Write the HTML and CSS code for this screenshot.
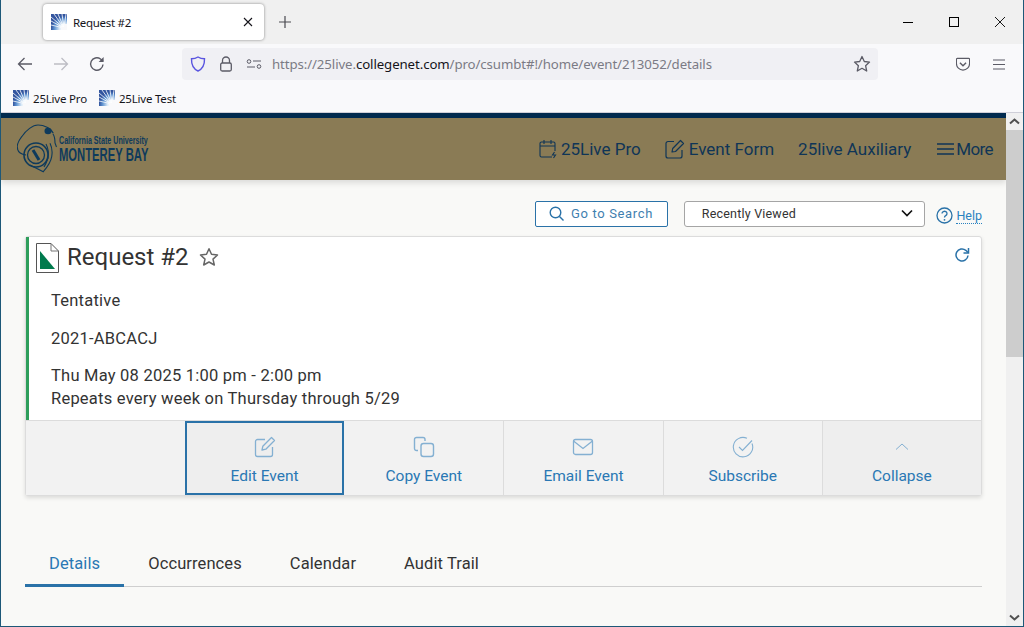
FILE: index.html
```html
<!DOCTYPE html>
<html lang="en">
<head>
<meta charset="utf-8">
<title>Request #2</title>
<link rel="stylesheet" href="styles.css">
</head>
<body>
<svg class="defs" width="0" height="0" aria-hidden="true">
  <defs>
    <radialGradient id="fade" cx="100%" cy="100%" r="85%" gradientTransform="translate(-0.15 -0.05)">
      <stop offset="0" stop-color="#fff"/><stop offset="0.35" stop-color="#e4f0fa"/><stop offset="0.75" stop-color="#5f93d0"/><stop offset="1" stop-color="#33559f"/>
    </radialGradient>
    <symbol id="fav" viewBox="0 0 16 16">
      <rect width="16" height="16" fill="url(#fade)"/>
      <g stroke="#fff" stroke-width=".8">
        <path d="M13 14 3 0M13 14 7 0M13 14 11 0M13 14 15 0M13 14 0 3M13 14 0 7M13 14 0 11"/>
      </g>
      <rect x="10" y="13" width="6" height="3" fill="#f9f9fb"/>
      <rect x="13" y="10" width="3" height="6" fill="#f9f9fb"/>
    </symbol>
  </defs>
</svg>
<div class="window">
  <div class="tabbar">
    <div class="tab">
      <svg class="fav16" width="16" height="16"><use href="#fav"/></svg>
      <span class="tab-title">Request #2</span>
      <svg class="tab-close" width="10" height="10" viewBox="0 0 10 10"><path d="M1 1l8 8M9 1l-8 8" stroke="#15141a" stroke-width="1.1"/></svg>
    </div>
    <svg class="new-tab" width="12" height="12" viewBox="0 0 12 12"><path d="M6 0v12M0 6h12" stroke="#4a4a50" stroke-width="1.2"/></svg>
    <div class="win-controls">
      <svg width="10" height="10" viewBox="0 0 10 10"><path d="M0 5.5h10" stroke="#000"/></svg>
      <svg width="10" height="10" viewBox="0 0 10 10"><rect x=".5" y=".5" width="9" height="9" fill="none" stroke="#000"/></svg>
      <svg width="10" height="10" viewBox="0 0 10 10"><path d="M0 0l10 10M10 0 0 10" stroke="#000" stroke-width=".9"/></svg>
    </div>
  </div>
  <div class="toolbar">
    <div class="nav-btns">
      <svg width="16" height="16" viewBox="0 0 16 16"><path d="M15 8H1.500M7.500 2 1.500 8l6 6" fill="none" stroke="#5b5b66" stroke-width="1.300"/></svg>
      <svg width="16" height="16" viewBox="0 0 16 16"><path d="M1 8h13.500M8.500 2l6 6-6 6" fill="none" stroke="#bdbdc4" stroke-width="1.300"/></svg>
      <svg width="16" height="16" viewBox="0 0 16 16"><path d="M14 8.500A6.200 6.200 0 1 1 11.500 3L14 5" fill="none" stroke="#5b5b66" stroke-width="1.400"/><path d="M14.600 1v5h-5z" fill="#5b5b66"/></svg>
    </div>
    <div class="urlbar">
      <svg class="u-shield" width="16" height="16" viewBox="0 0 16 16"><path d="M8 1c2 1.300 4 1.800 6.500 1.800C14.700 9 12.500 13 8 15 3.500 13 1.300 9 1.500 2.800 4 2.800 6 2.300 8 1z" fill="none" stroke="#5a55e0" stroke-width="1.400"/></svg>
      <svg class="u-lock" width="16" height="16" viewBox="0 0 16 16"><path d="M4.500 7V4.500a3.500 3.500 0 0 1 7 0V7" fill="none" stroke="#5b5b66" stroke-width="1.300"/><rect x="2.700" y="7" width="10.600" height="8" rx="1.500" fill="none" stroke="#5b5b66" stroke-width="1.300"/></svg>
      <svg class="u-perm" width="16" height="16" viewBox="0 0 16 16"><path d="M7 5h8M1 11h8" stroke="#5b5b66" stroke-width="1.200"/><circle cx="3" cy="5.500" r="1.800" fill="none" stroke="#5b5b66"/><circle cx="13" cy="10.500" r="1.800" fill="none" stroke="#5b5b66"/></svg>
      <span class="url">https://25live.<b>collegenet.com</b>/pro/csumbt#!/home/event/213052/details</span>
      <svg class="u-star" width="18" height="18" viewBox="0 0 18 18"><path d="M9 1.500l2.300 5 5.200.6-3.900 3.600 1.100 5.300L9 13.300 4.300 16l1.100-5.300L1.500 7.100l5.200-.6z" fill="none" stroke="#5b5b66" stroke-width="1.300" stroke-linejoin="round"/></svg>
    </div>
    <div class="tool-right">
      <svg width="14" height="14" viewBox="0 0 16 16"><path d="M1.500 1.500h13a1 1 0 0 1 1 1v5a7.500 7.500 0 0 1-15 0v-5a1 1 0 0 1 1-1z" fill="none" stroke="#5b5b66" stroke-width="1.300"/><path d="M4.500 6.500l3.500 3.500 3.500-3.500" fill="none" stroke="#5b5b66" stroke-width="1.600"/></svg>
      <svg width="12" height="11" viewBox="0 0 12 11"><path d="M0 1h12M0 5.500h12M0 10h12" stroke="#5b5b66" stroke-width="1.100"/></svg>
    </div>
  </div>
  <div class="bookmarks">
    <span class="bm"><svg width="16" height="16"><use href="#fav"/></svg>25Live Pro</span>
    <span class="bm"><svg width="16" height="16"><use href="#fav"/></svg>25Live Test</span>
  </div>
  <div class="viewport">
    <div class="page">
      <header class="site-head">
        <div class="logo">
          <svg width="40" height="50" viewBox="0 0 40 50">
            <g fill="none" stroke="#0e3a5c" stroke-width="1.100">
              <path d="M36.300 9.300C34 4 27 1 21 1 16 1 9 6 4.700 12.700 1.500 17 0 21 .3 23c0 4 1.700 7 8.700 8"/>
              <path d="M36 10c2 3 2 6 2 9l1.500 4M33 19.300c2 4 2.500 9 1.700 13.400-.8 5-4 10-8.400 15L13 41"/>
              <path d="M29 20c2 4 3 9 2 14-1 3-2 6-4 9"/>
              <circle cx="19" cy="31" r="12" stroke-width="1.600"/>
              <circle cx="19" cy="31" r="8.500" stroke-width="1.300"/>
              <path d="M16 26l6 10" stroke-width="3"/>
            </g>
            <ellipse cx="31" cy="7" rx="3.500" ry="3.200" fill="#0e3a5c"/>
          </svg>
          <div class="logo-text"><span class="logo-top">California State University</span><span class="logo-main">MONTEREY BAY</span></div>
        </div>
        <nav class="site-nav">
          <a class="nav-item"><svg width="18" height="20" viewBox="0 0 18 20"><g fill="none" stroke="#0f3557" stroke-width="1.100"><path d="M13 18H2.500A1.500 1.500 0 0 1 1 16.500V4.500A1.500 1.500 0 0 1 2.500 3h12A1.500 1.500 0 0 1 16 4.500V12M1 7h15M5 1v4M12 1v4"/><path d="M15.500 13l-2 3h3l-2 3"/></g></svg>25Live Pro</a>
          <a class="nav-item"><svg width="20" height="20" viewBox="0 0 20 20"><g fill="none" stroke="#0f3557" stroke-width="1.200"><path d="M9 2.500H3A2 2 0 0 0 1 4.500v12.500a2 2 0 0 0 2 2h12a2 2 0 0 0 2-2v-6"/><path d="M7 13l.7-3.500L15.500 1.500 18.500 4.500 10.500 12.500z" stroke-linejoin="round"/></g></svg>Event Form</a>
          <a class="nav-item">25live Auxiliary</a>
          <a class="nav-item nav-more"><svg width="19" height="14" viewBox="0 0 19 14"><path d="M1 2h17M1 7h17M1 12h17" stroke="#0f3557" stroke-width="1.600"/></svg><span class="more-label">More</span></a>
        </nav>
      </header>
      <main class="content">
        <div class="search-row">
          <button class="search-btn"><svg width="15" height="15" viewBox="0 0 15 15"><circle cx="6.500" cy="6.500" r="5.300" fill="none" stroke="#2a72a8" stroke-width="1.400"/><path d="M10.500 10.500l4 4" stroke="#2a72a8" stroke-width="1.400"/></svg>Go to Search</button>
          <div class="recent"><span>Recently Viewed</span><svg width="12" height="8" viewBox="0 0 12 8"><path d="M1 1.500l5 5 5-5" fill="none" stroke="#111" stroke-width="1.700"/></svg></div>
          <a class="help"><svg width="17" height="17" viewBox="0 0 17 17"><circle cx="8.500" cy="8.500" r="7.500" fill="none" stroke="#2a72a8" stroke-width="1.300"/><path d="M6 6.500a2.500 2.300 0 1 1 3.700 2.100c-.9.500-1.200 1-1.200 2" fill="none" stroke="#2a72a8" stroke-width="1.300"/><circle cx="8.500" cy="12.800" r=".9" fill="#2a72a8"/></svg><span>Help</span></a>
        </div>
        <section class="card">
          <div class="card-body">
            <div class="card-title">
              <svg class="doc" width="23" height="30" viewBox="0 0 23 30"><path d="M.5.5H15L22.500 8V29.500H.5z" fill="#fff" stroke="#555"/><path d="M15 .5V8h7.500" fill="none" stroke="#777"/><path d="M4 8 19 26H4z" fill="#007a4d"/></svg>
              <h1>Request #2</h1>
              <svg class="fav-star" width="20" height="20" viewBox="0 0 20 20"><path d="M10 1.800l2.500 5.500 6 .7-4.500 4.100 1.300 5.900L10 15l-5.300 3 1.300-5.900L1.500 8l6-.7z" fill="none" stroke="#666" stroke-width="1.500" stroke-linejoin="round"/></svg>
              <svg class="refresh" width="16" height="16" viewBox="0 0 16 16"><path d="M14 8.500A6 6 0 1 1 11.800 3.300L14 5.500" fill="none" stroke="#2a72a8" stroke-width="1.500"/><path d="M14.500 1v5h-5" fill="none" stroke="#2a72a8" stroke-width="1.500"/></svg>
            </div>
            <p class="state">Tentative</p>
            <p class="ref">2021-ABCACJ</p>
            <p class="date">Thu May 08 2025 1:00 pm - 2:00 pm<br>Repeats every week on Thursday through 5/29</p>
          </div>
          <div class="actions">
            <div class="act-spacer"></div>
            <a class="act act-active"><svg width="22" height="22" viewBox="0 0 22 22"><g fill="none" stroke="#84b0d2" stroke-width="1.300"><path d="M11 3.500H3.500a2 2 0 0 0-2 2v13a2 2 0 0 0 2 2h13a2 2 0 0 0 2-2V11"/><path d="M8 14l.8-3.700L17.500 1.500l3 3-8.700 8.700z" stroke-linejoin="round"/></g></svg>Edit Event</a>
            <a class="act"><svg width="22" height="22" viewBox="0 0 22 22"><g fill="none" stroke="#84b0d2" stroke-width="1.400"><rect x="8" y="7.500" width="12.500" height="13" rx="2.500"/><path d="M5 14.500H3.500a2 2 0 0 1-2-2V3.500a2 2 0 0 1 2-2H10a2 2 0 0 1 2 2v1.500"/></g></svg>Copy Event</a>
            <a class="act"><svg width="22" height="22" viewBox="0 0 22 22"><g fill="none" stroke="#84b0d2" stroke-width="1.300"><rect x="1.500" y="3.500" width="19" height="15" rx="2"/><path d="M1.500 5l9.500 7.500L20.500 5"/></g></svg>Email Event</a>
            <a class="act"><svg width="22" height="22" viewBox="0 0 22 22"><g fill="none" stroke="#84b0d2" stroke-width="1.100"><path d="M20 7.500A9.700 9.700 0 1 1 15 2.300"/><path d="M7 11l3.500 3.500 9.500-10"/></g></svg>Subscribe</a>
            <a class="act act-collapse"><svg width="22" height="22" viewBox="0 0 22 22"><path d="M5 13.500l6-5.500 6 5.500" fill="none" stroke="#84b0d2" stroke-width="1"/></svg>Collapse</a>
          </div>
        </section>
        <div class="tabs">
          <a class="tab-link tab-current">Details</a>
          <a class="tab-link">Occurrences</a>
          <a class="tab-link">Calendar</a>
          <a class="tab-link">Audit Trail</a>
        </div>
      </main>
    </div>
    <div class="scrollbar">
      <svg class="sb-arrow" width="17" height="17" viewBox="0 0 17 17"><path d="M4 10.500l4.500-4 4.500 4" fill="none" stroke="#505050" stroke-width="2"/></svg>
      <div class="sb-thumb"></div>
      <div class="sb-track"></div>
      <svg class="sb-arrow" width="17" height="17" viewBox="0 0 17 17"><path d="M4 6.500l4.500 4 4.500-4" fill="none" stroke="#505050" stroke-width="2"/></svg>
    </div>
  </div>
</div>
</body>
</html>
```
FILE: styles.css
```css
* { box-sizing: border-box; }
html, body { margin: 0; padding: 0; height: 100%; overflow: hidden; }
body { font-family: Roboto, "Liberation Sans", sans-serif; background: #f9f9f7; }
svg { display: block; flex: none; }
.defs { position: absolute; }
.window {
  width: 1024px; height: 627px; display: flex; flex-direction: column;
  border-left: 1px solid #1d5878; border-bottom: 1px solid #1d5878; border-right: 1px solid #1d5878;
}
.tabbar { height: 44px; background: #f0f0f0; display: flex; align-items: center; padding-left: 42px; flex: none; }
.tab {
  width: 221px; height: 36px; background: #fff; border-radius: 4px;
  box-shadow: 0 0 3px rgba(0,0,0,.45); display: flex; align-items: center; padding: 0 11px 0 8px;
}
.tab-title { font: 11.5px "Noto Sans", "Open Sans", sans-serif; letter-spacing: -.3px; color: #15141a; margin-left: 6px; flex: 1; }
.new-tab { margin-left: 15px; }
.win-controls { margin-left: auto; display: flex; gap: 36px; padding-right: 18px; }
.toolbar { height: 40px; background: #f9f9fb; display: flex; align-items: center; flex: none; }
.nav-btns { display: flex; gap: 20px; padding-left: 16px; width: 181px; }
.urlbar {
  width: 696px; height: 32px; background: #f0f0f4; border-radius: 4px;
  display: flex; align-items: center; padding-left: 8px;
}
.u-lock, .u-perm { margin-left: 12px; }
.url { font: 13.25px "Noto Sans", "Open Sans", sans-serif; color: #7b7b85; margin-left: 10px; flex: 1; white-space: nowrap; letter-spacing: -.1px; }
.url b { font-weight: 400; color: #15141a; }
.u-star { margin-right: 7px; }
.tool-right { display: flex; align-items: center; gap: 23px; padding-left: 78px; }
.bookmarks { height: 29px; background: #f9f9fb; border-bottom: 1px solid #cfcfd8; display: flex; gap: 12px; padding: 3px 0 0 12px; flex: none; }
.bm { display: flex; align-items: center; gap: 4px; font: 11.5px "Noto Sans", "Open Sans", sans-serif; color: #15141a; height: 22px; letter-spacing: -.2px; }
.viewport { flex: 1; display: flex; min-height: 0; }
.page { flex: 1; min-width: 0; overflow: hidden; }
.site-head {
  height: 67px; background: #8a7b55; border-top: 5px solid #002a4e;
  box-shadow: 0 3px 6px rgba(0,0,0,.12);
  display: flex; align-items: center; justify-content: space-between; padding: 0 13px 0 16px;
}
.logo { display: flex; align-items: center; gap: 2px; color: #0e3a5c; }
.logo-text { display: flex; flex-direction: column; font-family: "Liberation Sans", sans-serif; font-weight: 700; width: 90px; white-space: nowrap; }
.logo-top { font-size: 11px; line-height: 12px; transform: scaleX(.648); transform-origin: left center; }
.logo-main { font-size: 18px; line-height: 19px; transform: scaleX(.625); transform-origin: left center; }
.site-nav { display: flex; align-items: center; gap: 24px; }
.nav-item { display: flex; align-items: center; gap: 4px; font-size: 17px; color: #0f3557; white-space: nowrap; }
.nav-more { gap: 1px; margin-left: 1px; }
.more-label { letter-spacing: -.6px; }
.content { padding: 21px 24px 0; }
.search-row { display: flex; align-items: center; height: 26px; }
.search-btn {
  margin-left: 510px; width: 133px; height: 26px; background: #fff; border: 1px solid #2a72a8; border-radius: 2px;
  font: 13px Roboto, sans-serif; letter-spacing: .65px; color: #3f7fb0; display: flex; align-items: center; gap: 7px; padding: 0 0 1px 13px;
}
.recent {
  margin-left: 16px; width: 242px; height: 26px; background: #fff; border: 1px solid #a5a5a5; border-radius: 3px;
  display: flex; align-items: center; justify-content: space-between; padding: 0 11px 2px 17px;
  font-size: 12.5px; letter-spacing: .2px; color: #333;
}
.help { display: flex; align-items: center; gap: 3px; margin-left: 11px; font-size: 12.5px; color: #2a82c0; margin-top: 3px; }
.help span { border-bottom: 1px dotted #2a82c0; }
.card {
  margin-top: 9px; width: 957px; height: 260px; border: 1px solid #dcdcdc; border-radius: 3px;
  background: #fff; box-shadow: 0 2px 4px rgba(0,0,0,.12); display: flex; flex-direction: column;
}
.card-body { flex: 1; min-height: 0; border-left: 3px solid #2e9e5b; padding: 5px 10px 0 7px; color: #333; font-size: 16.5px; }
.card-title { display: flex; align-items: center; height: 30px; }
.doc { margin-right: 8px; margin-top: 2px; }
h1 { margin: 0; font-size: 24px; font-weight: 400; color: #333; line-height: 28px; }
.fav-star { margin-left: 10px; margin-top: -1px; }
.refresh { margin-left: auto; margin-right: 1px; margin-top: -4px; }
.state, .ref, .date { margin: 0 0 0 15px; line-height: 23px; letter-spacing: .23px; }
.state { margin-top: 17px; }
.ref { margin-top: 15px; }
.date { margin-top: 14px; }
.actions {
  height: 75px; background: #f2f2f2; border-top: 1px solid #dcdcdc; flex: none;
  display: grid; grid-template-columns: 159px repeat(5, 1fr);
}
.act {
  display: flex; flex-direction: column; align-items: center; gap: 9px; padding-top: 15px;
  border-left: 1px solid #dcdcdc; color: #2a78b4; font-size: 15.5px;
}
.act-active { border: 2px solid #2a72a8; background: #eee; padding-top: 13px; }
.act-active + .act { border-left: 0; }
.act-collapse { background: #eee; }
.tabs { display: flex; margin-top: 48px; width: 957px; border-bottom: 1px solid #cfcfcf; height: 43px; }
.tab-link { padding: 10px 24px 0; font-size: 16.5px; letter-spacing: .1px; color: #333; height: 42px; }
.tab-current { color: #2a78b4; border-bottom: 3px solid #2a72a8; height: 43px; }
.scrollbar { width: 17px; flex: none; background: #f0f0f0; display: flex; flex-direction: column; }
.sb-thumb { height: 227px; background: #cdcdcd; }
.sb-track { flex: 1; }
```
